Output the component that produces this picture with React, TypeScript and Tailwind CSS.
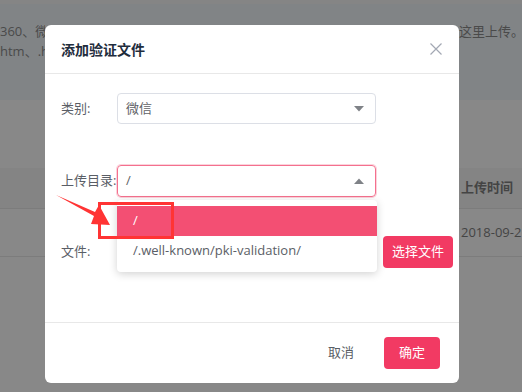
import React from "react";

const font = { fontFamily: '"Open Sans", "Noto Sans CJK SC", sans-serif' };

const Caret = ({ up = false }: { up?: boolean }) => (
  <svg width="12" height="8" viewBox="0 0 12 8" className="text-[#7f8287]">
    {up ? (
      <path d="M1 7 L6 1.5 L11 7 Z" fill="currentColor" />
    ) : (
      <path d="M1 1 L11 1 L6 6.5 Z" fill="currentColor" />
    )}
  </svg>
);

export default function App() {
  return (
    <div
      className="relative w-[522px] h-[392px] overflow-hidden bg-[#888888] text-[13px]"
      style={font}
    >
      {/* page behind the mask */}
      <div className="h-[4px] bg-[#858585]" />
      <div className="h-[96px] bg-[#818486] pt-[17px] text-[13px] leading-[20px] text-[#4a4a4a]">
        <div className="flex justify-between whitespace-nowrap">
          <span className="w-[45px] overflow-hidden">360、微信</span>
          <span className="w-[63px]">这里上传。</span>
        </div>
        <div className="w-[45px] overflow-hidden whitespace-nowrap">htm、.html</div>
      </div>
      <div className="h-[68px]" />
      <div className="h-[41px] bg-[#848484] border-b border-[#7c7c7c] flex justify-end items-center">
        <span className="w-[61px] font-bold text-[13px] text-[#444]">上传时间</span>
      </div>
      <div className="h-[48px] border-b border-[#7c7c7c] flex justify-end items-center">
        <span className="w-[61px] overflow-hidden whitespace-nowrap text-[13px] text-[#444]">2018-09-2</span>
      </div>

      {/* modal */}
      <div className="absolute left-[45px] top-[25px] w-[414px] h-[358px] bg-white rounded-[6px] flex flex-col">
        <div className="h-[49px] border-b border-[#e8e8e8] flex items-center justify-between pl-[16px] pr-[16px]">
          <span className="font-bold text-[14px] text-[#1f2d3d]">添加验证文件</span>
          <svg width="14" height="14" viewBox="0 0 14 14" className="text-[#a3a8b3]">
            <path d="M1.5 1.5 L12.5 12.5 M12.5 1.5 L1.5 12.5" stroke="currentColor" strokeWidth="1.2" />
          </svg>
        </div>

        <div className="flex-1 pl-[16px] pt-[19px] relative">
          <div className="flex items-center h-[31px]">
            <span className="w-[56px] whitespace-nowrap text-[#5a5e66]">类别:</span>
            <div className="w-[259px] h-[31px] border border-[#dcdfe6] rounded-[4px] flex items-center justify-between pl-[8px] pr-[10px] text-[#606266]">
              <span>微信</span>
              <Caret />
            </div>
          </div>

          <div className="flex items-center h-[32px] mt-[41px]">
            <span className="w-[56px] whitespace-nowrap text-[#5a5e66]">上传目录:</span>
            <div className="relative w-[259px] h-[32px] border border-[#f4708e] rounded-[4px] flex items-center justify-between pl-[8px] pr-[10px] text-[#606266] shadow-[0_0_0_1px_#fbd3dc]">
              <span>/</span>
              <Caret up />
              <div className="absolute left-[-1px] top-[34px] w-[260px] bg-white rounded-[4px] shadow-[0_2px_8px_rgba(0,0,0,0.18)] py-[6px] z-10">
                <div className="h-[30px] bg-[#f34f73] text-white flex items-center pl-[16px]">/</div>
                <div className="h-[30px] text-[#5a5e66] flex items-center pl-[16px]">/.well-known/pki-validation/</div>
              </div>
            </div>
          </div>

          <div className="flex items-center h-[32px] mt-[39px]">
            <span className="w-[322px] whitespace-nowrap text-[#5a5e66]">文件:</span>
            <button className="w-[70px] h-[32px] bg-[#f23a63] text-white rounded-[4px] text-[13px]">
              选择文件
            </button>
          </div>
        </div>

        <div className="h-[61px] border-t border-[#e8e8e8] flex items-center justify-end pr-[19px]">
          <span className="text-[#5a5e66] mr-[30px]">取消</span>
          <button className="w-[56px] h-[32px] bg-[#f23a63] text-white rounded-[4px]">确定</button>
        </div>
      </div>

      {/* annotation */}
      <div className="absolute left-[98px] top-[202px] w-[76px] h-[37px] border-[3px] border-[#ff3434] z-20" />
      <svg className="absolute left-0 top-0 z-20" width="522" height="392">
        <polygon points="56,195 95,212 99,205 110,225 91,224 94,216" fill="#ff3434" />
      </svg>
    </div>
  );
}
